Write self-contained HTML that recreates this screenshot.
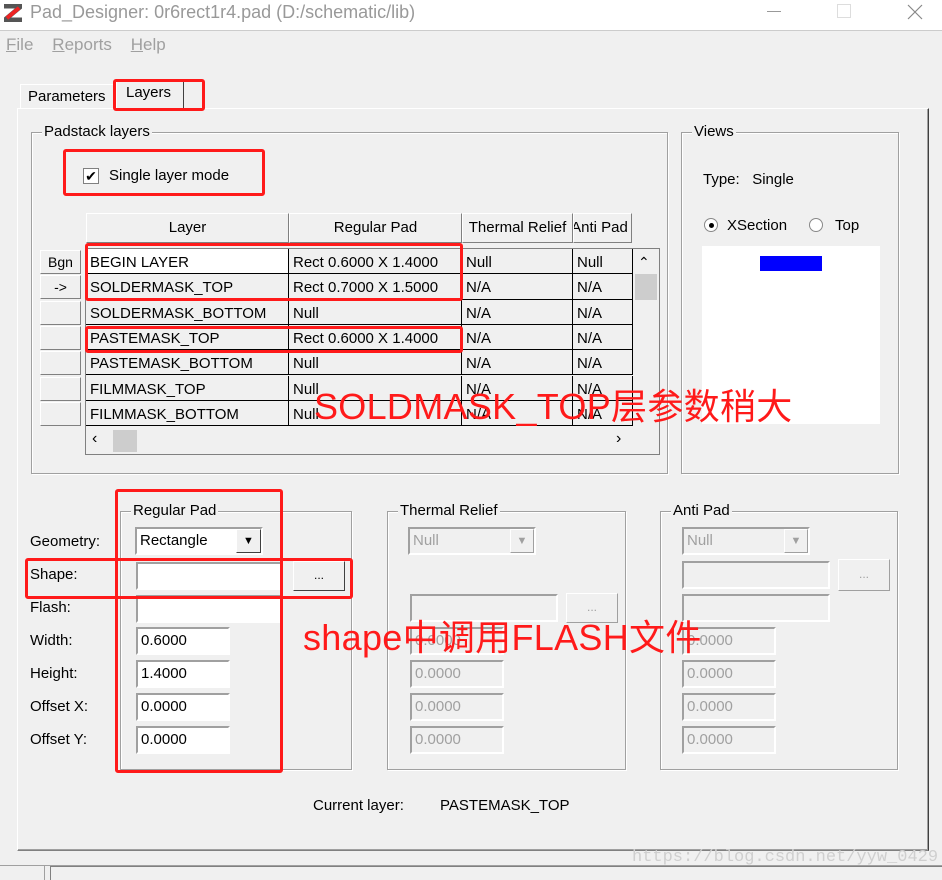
<!DOCTYPE html>
<html><head><meta charset="utf-8"><style>
*{box-sizing:border-box;margin:0;padding:0}
body{width:942px;height:880px;background:#f0f0f0;font-family:"Liberation Sans","Noto Sans CJK SC",sans-serif;font-size:15px;color:#000;position:relative;overflow:hidden}
.a{position:absolute}
.grp{position:absolute;border:1px solid #a0a0a0;box-shadow:inset 1px 1px 0 #fff,1px 1px 0 #fff}
.gl{position:absolute;top:-10px;left:10px;background:#f0f0f0;padding:0 2px;font-size:15px}
.red{position:absolute;border:3px solid #ff1a1a;border-radius:3px}
.cell{position:absolute;border-right:1px solid #000;border-bottom:1px solid #000;padding-left:4px;padding-top:2px;line-height:24px;white-space:nowrap;overflow:hidden;font-size:15px}
.hdr{position:absolute;background:#f0f0f0;border:1px solid;border-color:#fff #808080 #808080 #fff;text-align:center;line-height:28px;overflow:hidden;white-space:nowrap}
.btn{position:absolute;left:40px;width:41px;height:24px;background:#f0f0f0;border:1px solid;border-color:#fff #808080 #808080 #fff;text-align:center;line-height:22px;font-size:14px}
.inp{position:absolute;background:#fff;border:2px solid;border-color:#a0a0a0 #fff #fff #a0a0a0;height:28px;line-height:24px;padding-left:3px;font-size:15px}
.dis{background:#f0f0f0;color:#a0a0a0}
.lbl{position:absolute;left:30px;font-size:15px}
.rt{position:absolute;color:#ff1a1a;font-size:36px;white-space:nowrap;letter-spacing:0.3px}
</style></head><body>
<div class="a" style="left:0;top:0;width:942px;height:31px;background:#fff;border-bottom:1px solid #ccc"></div>
<div class="a" style="left:4px;top:4px;width:18px;height:18px;background:#555;clip-path:polygon(0 0,100% 0,100% 25%,40% 75%,100% 75%,100% 100%,0 100%,0 75%,60% 25%,0 25%)"></div>
<div class="a" style="left:5px;top:11px;width:16px;height:4px;background:#e22;transform:rotate(-40deg)"></div>
<div class="a" style="left:30px;top:2px;font-size:18px;color:#999">Pad_Designer: 0r6rect1r4.pad (D:/schematic/lib)</div>
<div class="a" style="left:767px;top:11px;width:14px;height:1px;background:#999"></div>
<div class="a" style="left:837px;top:4px;width:14px;height:14px;border:1px solid #ddd"></div>
<svg class="a" style="left:907px;top:4px" width="16" height="16"><path d="M1 1L15 15M15 1L1 15" stroke="#888" stroke-width="1.2"/></svg>
<div class="a" style="left:6px;top:35px;font-size:17px;color:#a0a0a0"><u>F</u>ile&nbsp;&nbsp;&nbsp; <u>R</u>eports&nbsp;&nbsp;&nbsp; <u>H</u>elp</div>
<div class="a" style="left:17px;top:108px;width:912px;height:743px;border:1px solid;border-color:#fff #404040 #808080 #fff;box-shadow:inset -1px -1px 0 #a0a0a0"></div>
<div class="a" style="left:20px;top:84px;width:96px;height:25px;border:1px solid;border-color:#fff #808080 transparent #fff;padding-left:7px;line-height:24px">Parameters</div>
<div class="a" style="left:116px;top:80px;width:68px;height:30px;background:#f0f0f0;border:1px solid;border-color:#fff #404040 transparent #fff;padding-left:9px;line-height:24px">Layers</div>
<div class="red" style="left:113px;top:79px;width:92px;height:32px"></div>
<div class="grp" style="left:31px;top:132px;width:637px;height:342px"><span class="gl">Padstack layers</span></div>
<div class="a" style="left:83px;top:168px;width:16px;height:16px;background:#fff;border:1px solid #808080;font-size:14px;line-height:14px;text-align:center">✔</div>
<div class="a" style="left:109px;top:167px">Single layer mode</div>
<div class="red" style="left:63px;top:149px;width:202px;height:47px"></div>
<div class="hdr" style="left:86px;top:213px;width:203px;height:30px">Layer</div>
<div class="hdr" style="left:289px;top:213px;width:173px;height:30px">Regular Pad</div>
<div class="hdr" style="left:462px;top:213px;width:111px;height:30px">Thermal Relief</div>
<div class="hdr" style="left:573px;top:213px;width:59px;height:30px;text-indent:-6px">Anti Pad</div>
<div class="a" style="left:85px;top:248px;width:575px;height:207px;border:1px solid #808080;background:#f0f0f0"></div>
<div id="rows"></div>
<div class="a" style="left:633px;top:249px;width:26px;height:180px;background:#f0f0f0"></div>
<div class="a" style="left:638px;top:254px;font-size:14px">⌃</div>
<div class="a" style="left:635px;top:274px;width:22px;height:26px;background:#cdcdcd"></div>
<div class="a" style="left:86px;top:428px;width:573px;height:26px;background:#f0f0f0"></div>
<div class="a" style="left:92px;top:430px;font-size:16px">‹</div>
<div class="a" style="left:113px;top:430px;width:24px;height:22px;background:#cdcdcd"></div>
<div class="a" style="left:616px;top:430px;font-size:16px">›</div>
<div class="red" style="left:85px;top:243px;width:378px;height:58px"></div>
<div class="red" style="left:85px;top:326px;width:378px;height:27px"></div>
<div class="grp" style="left:681px;top:132px;width:218px;height:342px"><span class="gl">Views</span></div>
<div class="a" style="left:703px;top:171px">Type:&nbsp;&nbsp; Single</div>
<div class="a" style="left:704px;top:218px;width:14px;height:14px;border-radius:50%;border:1px solid #888;background:#fff"></div>
<div class="a" style="left:709px;top:223px;width:5px;height:5px;border-radius:50%;background:#000"></div>
<div class="a" style="left:727px;top:217px">XSection</div>
<div class="a" style="left:809px;top:218px;width:14px;height:14px;border-radius:50%;border:1px solid #888;background:#fff"></div>
<div class="a" style="left:835px;top:217px">Top</div>
<div class="a" style="left:702px;top:246px;width:178px;height:178px;background:#fff"></div>
<div class="a" style="left:760px;top:256px;width:62px;height:15px;background:#0000ff"></div>
<div class="grp" style="left:120px;top:511px;width:232px;height:259px"><span class="gl">Regular Pad</span></div>
<div class="grp" style="left:387px;top:511px;width:239px;height:259px"><span class="gl">Thermal Relief</span></div>
<div class="grp" style="left:660px;top:511px;width:238px;height:259px"><span class="gl">Anti Pad</span></div>
<div class="lbl" style="top:533px">Geometry:</div>
<div class="lbl" style="top:566px">Shape:</div>
<div class="lbl" style="top:599px">Flash:</div>
<div class="lbl" style="top:632px">Width:</div>
<div class="lbl" style="top:665px">Height:</div>
<div class="lbl" style="top:698px">Offset X:</div>
<div class="lbl" style="top:731px">Offset Y:</div>
<div class="inp" style="left:135px;top:527px;width:128px">Rectangle</div>
<div class="a" style="left:236px;top:529px;width:25px;height:24px;background:#f0f0f0;border:1px solid;border-color:#fff #404040 #404040 #fff;text-align:center;font-size:11px;line-height:22px">▼</div>
<div class="inp" style="left:136px;top:562px;width:146px"></div>
<div class="a" style="left:293px;top:561px;width:52px;height:30px;border:1px solid;border-color:#fff #404040 #404040 #fff;text-align:center;font-size:12px;line-height:26px">...</div>
<div class="inp" style="left:136px;top:595px;width:146px"></div>
<div class="inp" style="left:136px;top:627px;width:94px">0.6000</div>
<div class="inp" style="left:136px;top:660px;width:94px">1.4000</div>
<div class="inp" style="left:136px;top:693px;width:94px">0.0000</div>
<div class="inp" style="left:136px;top:726px;width:94px">0.0000</div>
<div class="inp dis" style="left:408px;top:527px;width:128px">Null</div>
<div class="a" style="left:510px;top:529px;width:24px;height:24px;border:1px solid;border-color:#fff #a0a0a0 #a0a0a0 #fff;color:#a0a0a0;text-align:center;font-size:11px;line-height:22px">▼</div>
<div class="inp dis" style="left:410px;top:594px;width:148px"></div>
<div class="a" style="left:566px;top:593px;width:52px;height:30px;border:1px solid;border-color:#fff #a0a0a0 #a0a0a0 #fff;color:#a0a0a0;text-align:center;font-size:12px;line-height:26px">...</div>
<div class="inp dis" style="left:410px;top:627px;width:94px">0.0000</div>
<div class="inp dis" style="left:410px;top:660px;width:94px">0.0000</div>
<div class="inp dis" style="left:410px;top:693px;width:94px">0.0000</div>
<div class="inp dis" style="left:410px;top:726px;width:94px">0.0000</div>
<div class="inp dis" style="left:682px;top:527px;width:128px">Null</div>
<div class="a" style="left:784px;top:529px;width:24px;height:24px;border:1px solid;border-color:#fff #a0a0a0 #a0a0a0 #fff;color:#a0a0a0;text-align:center;font-size:11px;line-height:22px">▼</div>
<div class="inp dis" style="left:682px;top:561px;width:148px"></div>
<div class="a" style="left:838px;top:559px;width:52px;height:32px;border:1px solid;border-color:#fff #a0a0a0 #a0a0a0 #fff;color:#a0a0a0;text-align:center;font-size:12px;line-height:28px">...</div>
<div class="inp dis" style="left:682px;top:594px;width:148px"></div>
<div class="inp dis" style="left:682px;top:627px;width:94px">0.0000</div>
<div class="inp dis" style="left:682px;top:660px;width:94px">0.0000</div>
<div class="inp dis" style="left:682px;top:693px;width:94px">0.0000</div>
<div class="inp dis" style="left:682px;top:726px;width:94px">0.0000</div>
<div class="red" style="left:115px;top:489px;width:168px;height:284px"></div>
<div class="red" style="left:25px;top:558px;width:328px;height:41px"></div>
<div class="a" style="left:313px;top:797px;font-size:15px">Current layer:</div>
<div class="a" style="left:440px;top:797px;font-size:15px">PASTEMASK_TOP</div>
<div class="rt" style="left:314px;top:378px">SOLDMASK_TOP层参数稍大</div>
<div class="rt" style="left:303px;top:609px">shape中调用FLASH文件</div>
<div class="a" style="left:0;top:865px;width:942px;height:1px;background:#a0a0a0"></div>
<div class="a" style="left:44px;top:866px;width:1px;height:14px;background:#a0a0a0"></div>
<div class="a" style="left:50px;top:866px;width:892px;height:14px;border-left:1px solid #808080;border-top:1px solid #808080"></div>
<div class="a" style="left:632px;top:848px;font-family:'Liberation Mono',monospace;font-size:17px;color:#cfcfcf">https://blog.csdn.net/yyw_0429</div>
<script>
var rows=[["Bgn","BEGIN LAYER","Rect 0.6000 X 1.4000","Null","Null"],["->","SOLDERMASK_TOP","Rect 0.7000 X 1.5000","N/A","N/A"],["","SOLDERMASK_BOTTOM","Null","N/A","N/A"],["","PASTEMASK_TOP","Rect 0.6000 X 1.4000","N/A","N/A"],["","PASTEMASK_BOTTOM","Null","N/A","N/A"],["","FILMMASK_TOP","Null","N/A","N/A"],["","FILMMASK_BOTTOM","Null","N/A","N/A"]];
var h="",xs=[86,289,462,573],ws=[203,173,111,60];
rows.forEach(function(r,i){var y=249+i*25.3;
h+='<div class="btn" style="top:'+(y+1)+'px">'+r[0]+'</div>';
for(var c=0;c<4;c++)h+='<div class="cell" style="left:'+xs[c]+'px;top:'+y+'px;width:'+ws[c]+'px;height:25.3px;'+(i==0&&c==0?'background:#fff':'')+'">'+r[c+1]+'</div>';});
document.getElementById('rows').outerHTML=h;
</script>
</body></html>
